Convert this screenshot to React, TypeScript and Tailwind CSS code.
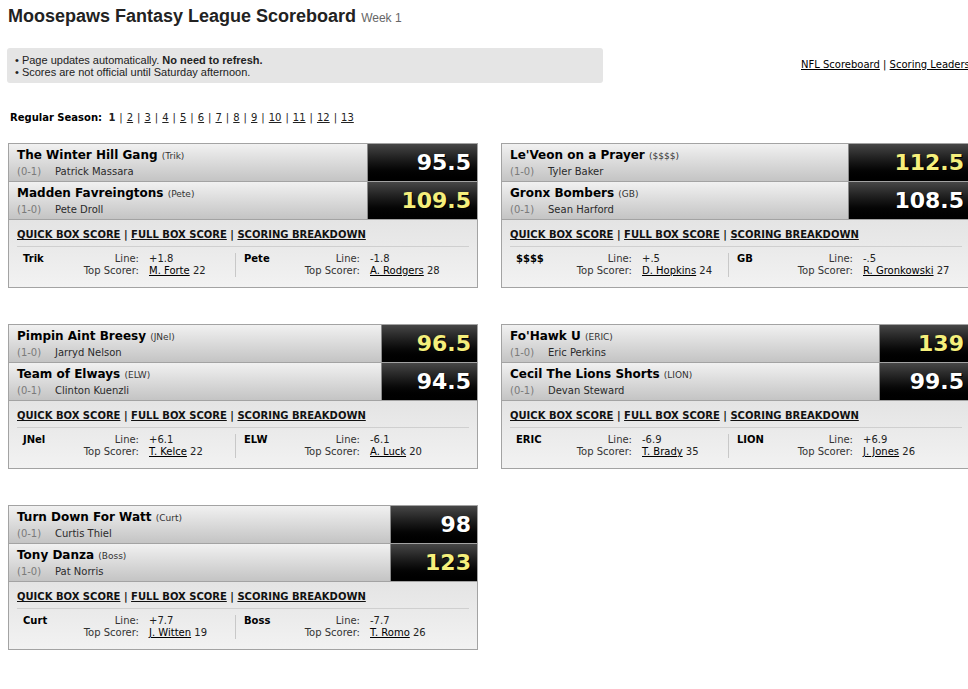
import React from "react";

type Team = {
  name: string;
  abbr: string;
  rec: string;
  owner: string;
  score: string;
  win: boolean;
  line: string;
  top: string;
  pts: number;
};

type Matchup = { teams: [Team, Team]; scoreW: string };

const matchups: Matchup[] = [
  {
    scoreW: "w-[110px]",
    teams: [
      { name: "The Winter Hill Gang", abbr: "Trik", rec: "(0-1)", owner: "Patrick Massara", score: "95.5", win: false, line: "+1.8", top: "M. Forte", pts: 22 },
      { name: "Madden Favreingtons", abbr: "Pete", rec: "(1-0)", owner: "Pete Droll", score: "109.5", win: true, line: "-1.8", top: "A. Rodgers", pts: 28 },
    ],
  },
  {
    scoreW: "w-[122px]",
    teams: [
      { name: "Le'Veon on a Prayer", abbr: "$$$$", rec: "(1-0)", owner: "Tyler Baker", score: "112.5", win: true, line: "+.5", top: "D. Hopkins", pts: 24 },
      { name: "Gronx Bombers", abbr: "GB", rec: "(0-1)", owner: "Sean Harford", score: "108.5", win: false, line: "-.5", top: "R. Gronkowski", pts: 27 },
    ],
  },
  {
    scoreW: "w-[96px]",
    teams: [
      { name: "Pimpin Aint Breesy", abbr: "JNel", rec: "(1-0)", owner: "Jarryd Nelson", score: "96.5", win: true, line: "+6.1", top: "T. Kelce", pts: 22 },
      { name: "Team of Elways", abbr: "ELW", rec: "(0-1)", owner: "Clinton Kuenzli", score: "94.5", win: false, line: "-6.1", top: "A. Luck", pts: 20 },
    ],
  },
  {
    scoreW: "w-[91px]",
    teams: [
      { name: "Fo'Hawk U", abbr: "ERIC", rec: "(1-0)", owner: "Eric Perkins", score: "139", win: true, line: "-6.9", top: "T. Brady", pts: 35 },
      { name: "Cecil The Lions Shorts", abbr: "LION", rec: "(0-1)", owner: "Devan Steward", score: "99.5", win: false, line: "+6.9", top: "J. Jones", pts: 26 },
    ],
  },
  {
    scoreW: "w-[87px]",
    teams: [
      { name: "Turn Down For Watt", abbr: "Curt", rec: "(0-1)", owner: "Curtis Thiel", score: "98", win: false, line: "+7.7", top: "J. Witten", pts: 19 },
      { name: "Tony Danza", abbr: "Boss", rec: "(1-0)", owner: "Pat Norris", score: "123", win: true, line: "-7.7", top: "T. Romo", pts: 26 },
    ],
  },
];

const weeks = [2, 3, 4, 5, 6, 7, 8, 9, 10, 11, 12, 13];

function TeamRow({ t, scoreW }: { t: Team; scoreW: string }) {
  return (
    <div className="flex h-[38px] border-b border-[#a3a3a3]">
      <div className="flex-1 bg-linear-to-b from-[#f1f1f1] to-[#c4c4c4] pl-[8px] pt-[4px]">
        <div className="leading-[15px] text-[12px] font-bold text-black">
          {t.name} <span className="text-[9px] font-normal text-[#333]">({t.abbr})</span>
        </div>
        <div className="mt-px flex text-[10px] leading-[13px]">
          <span className="w-[38px] text-[#7a7a7a]">{t.rec}</span>
          <span className="text-[#2a2a2a]">{t.owner}</span>
        </div>
      </div>
      <div
        className={`${scoreW} flex items-center justify-end border-l border-[#8a8a8a] bg-linear-to-b from-[#474747] to-black pr-[6px] text-[22px] font-bold [text-shadow:1px_1px_0_#000] ${
          t.win ? "text-[#f5ef7c]" : "text-white"
        }`}
      >
        {t.score}
      </div>
    </div>
  );
}

function StatHalf({ t, cls }: { t: Team; cls: string }) {
  return (
    <div className={`flex text-[10px] leading-[12px] text-[#222] ${cls}`}>
      <span className="w-[44px] font-bold text-black">{t.abbr}</span>
      <div className="grid grid-cols-[72px_auto] gap-x-[10px]">
        <span className="text-right text-[#333]">Line:</span>
        <span>{t.line}</span>
        <span className="text-right text-[#333]">Top Scorer:</span>
        <span>
          <a className="underline text-black">{t.top}</a> {t.pts}
        </span>
      </div>
    </div>
  );
}

function Card({ m }: { m: Matchup }) {
  const [a, b] = m.teams;
  return (
    <div className="border border-[#a3a3a3]">
      <TeamRow t={a} scoreW={m.scoreW} />
      <TeamRow t={b} scoreW={m.scoreW} />
      <div className="h-[67px] bg-linear-to-b from-[#e4e4e4] to-[#f2f2f2] px-[8px]">
        <div className="border-b border-[#cfcfcf] pt-[9px] pb-[5px] text-[10px] leading-[12px] font-bold text-[#111]">
          <a className="underline">QUICK BOX SCORE</a> | <a className="underline">FULL BOX SCORE</a> |{" "}
          <a className="underline">SCORING BREAKDOWN</a>
        </div>
        <div className="mt-[6px] flex">
          <StatHalf t={a} cls="w-[219px] pl-[6px] border-r border-[#c8c8c8]" />
          <StatHalf t={b} cls="flex-1 pl-[8px]" />
        </div>
      </div>
    </div>
  );
}

export default function App() {
  return (
    <div className="w-full overflow-hidden bg-white">
      <div className="w-[990px] px-[8px] pt-[5px] pb-[30px] font-['DejaVu_Sans',sans-serif] text-[#222]">
        {/* title */}
        <h1 className="font-['Liberation_Sans',Arial,sans-serif] text-[18px] leading-[22px] font-bold text-[#222]">
          Moosepaws Fantasy League Scoreboard{" "}
          <span className="text-[12px] font-normal text-[#666]">Week 1</span>
        </h1>

        {/* notice + links */}
        <div className="mt-[19px] flex items-center">
          <div className="-ml-[1px] w-[596px] rounded-[3px] bg-[#e5e5e5] pt-[6px] pb-[5px] pl-[8px] font-['Liberation_Sans',Arial,sans-serif] text-[11px] leading-[12px] text-[#222]">
            <div>
              • Page updates automatically. <b>No need to refresh.</b>
            </div>
            <div>• Scores are not official until Saturday afternoon.</div>
          </div>
          <div className="ml-[198px] -mt-[2px] text-[10px] text-black">
            <a className="underline">NFL Scoreboard</a> | <a className="underline">Scoring Leaders</a>
          </div>
        </div>

        {/* week selector */}
        <div className="mt-[29px] pl-[2px] text-[10px] leading-[12px] text-[#222]">
          <b className="text-black">Regular Season:</b>&nbsp; <b>1</b>
          {weeks.map((w) => (
            <span key={w}>
              <span className="mx-[4px]">|</span>
              <a className="underline">{w}</a>
            </span>
          ))}
        </div>

        {/* matchups */}
        <div className="mt-[19px] grid grid-cols-[470px_470px] gap-x-[23px] gap-y-[36px]">
          {matchups.map((m, i) => (
            <Card key={i} m={m} />
          ))}
        </div>
      </div>
    </div>
  );
}
